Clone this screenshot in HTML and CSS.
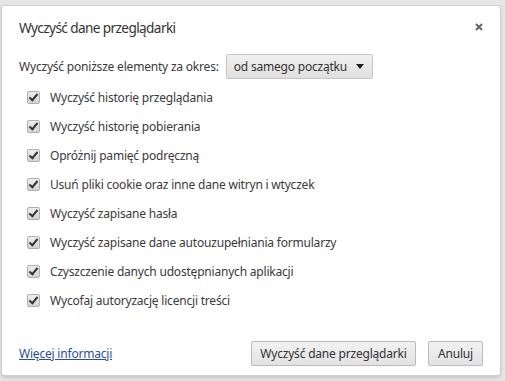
FILE: index.html
```html
<!DOCTYPE html>
<html lang="pl">
<head>
<meta charset="utf-8">
<title>Wyczyść dane przeglądarki</title>
<link rel="stylesheet" href="styles.css">
</head>
<body>
<div class="dialog">
  <div class="header">
    <h1 class="title">Wyczyść dane przeglądarki</h1>
    <span class="close"><svg width="8" height="8" viewBox="0 0 8 8"><path d="M1 1L7 7M7 1L1 7" stroke="#666" stroke-width="2"/></svg></span>
  </div>
  <div class="period">
    <span>Wyczyść poniższe elementy za okres:</span>
    <div class="select"><span>od samego początku</span><span class="arrow"></span></div>
  </div>
  <ul class="list">
    <li class="item"><span class="cb"></span>Wyczyść historię przeglądania</li>
    <li class="item"><span class="cb"></span>Wyczyść historię pobierania</li>
    <li class="item"><span class="cb"></span>Opróżnij pamięć podręczną</li>
    <li class="item"><span class="cb"></span>Usuń pliki cookie oraz inne dane witryn i wtyczek</li>
    <li class="item"><span class="cb"></span>Wyczyść zapisane hasła</li>
    <li class="item"><span class="cb"></span>Wyczyść zapisane dane autouzupełniania formularzy</li>
    <li class="item"><span class="cb"></span>Czyszczenie danych udostępnianych aplikacji</li>
    <li class="item"><span class="cb"></span>Wycofaj autoryzację licencji treści</li>
  </ul>
  <div class="footer">
    <a class="link" href="#">Więcej informacji</a>
    <div class="buttons">
      <button class="btn btn-main">Wyczyść dane przeglądarki</button>
      <button class="btn btn-cancel">Anuluj</button>
    </div>
  </div>
</div>
</body>
</html>
```
FILE: styles.css
```css
html, body { margin: 0; padding: 0; }
body {
  width: 505px; height: 381px; overflow: hidden;
  background: #e6e6e6;
  font-family: "Noto Sans", "Open Sans", sans-serif;
  font-size: 12px; letter-spacing: -0.2px; color: #3a3a3a;
}
.dialog {
  margin: 6px 5px 0 2px;
  height: 369px;
  background: #fff;
  border-radius: 2px;
  box-shadow: 0 0 0 1px #cfcfcf, 0 2px 4px rgba(0,0,0,0.2);
  box-sizing: border-box;
  padding: 0 0 0 17px;
  display: flex; flex-direction: column;
}
.header { display: flex; align-items: center; justify-content: space-between; height: 42px; padding-right: 17px; }
.title { margin: 0; font-size: 13.6px; letter-spacing: -0.6px; font-weight: normal; color: #333; white-space: nowrap; }
.close { display: flex; }
.period { display: flex; align-items: center; gap: 7px; height: 36px; }
.select {
  flex: none; min-width: 0;
  width: 147px; height: 25px; box-sizing: border-box;
  border: 1px solid #c6c6c6; border-radius: 2px;
  background: linear-gradient(#f0f0f0, #e0e0e0);
  display: flex; align-items: center; justify-content: space-between;
  padding: 0 8px 0 7px; color: #333; white-space: nowrap;
}
.arrow { width: 0; height: 0; border-left: 4px solid transparent; border-right: 4px solid transparent; border-top: 5px solid #222; }
.list { list-style: none; margin: -1px 0 0 8px; padding: 0; display: flex; flex-direction: column; }
.item { display: flex; align-items: center; height: 29px; }
.cb {
  width: 11px; height: 11px; margin-right: 10px;
  border: 1px solid #b0b0b0; border-radius: 2px;
  background: linear-gradient(#eee, #d2d2d2);
  position: relative;
}
.cb::after {
  content: ""; position: absolute; left: 3px; top: 0px;
  width: 3px; height: 7px;
  border: solid #333; border-width: 0 2px 2px 0;
  transform: rotate(40deg);
}
.footer { margin-top: auto; display: flex; align-items: center; justify-content: space-between; height: 42px; margin-bottom: 1px; padding-right: 17px; }
.link { color: #1f4fa8; text-decoration: underline; }
.buttons { display: flex; gap: 12px; }
.btn {
  height: 25px; box-sizing: border-box; padding: 0;
  font-family: inherit; font-size: 12px; letter-spacing: -0.2px; color: #333;
  white-space: nowrap; text-align: center;
  border: 1px solid #bbb; border-radius: 2px;
  background: linear-gradient(#f2f2f2, #e2e2e2);
}
.btn-main { width: 165px; }
.btn-cancel { width: 55px; }
```
